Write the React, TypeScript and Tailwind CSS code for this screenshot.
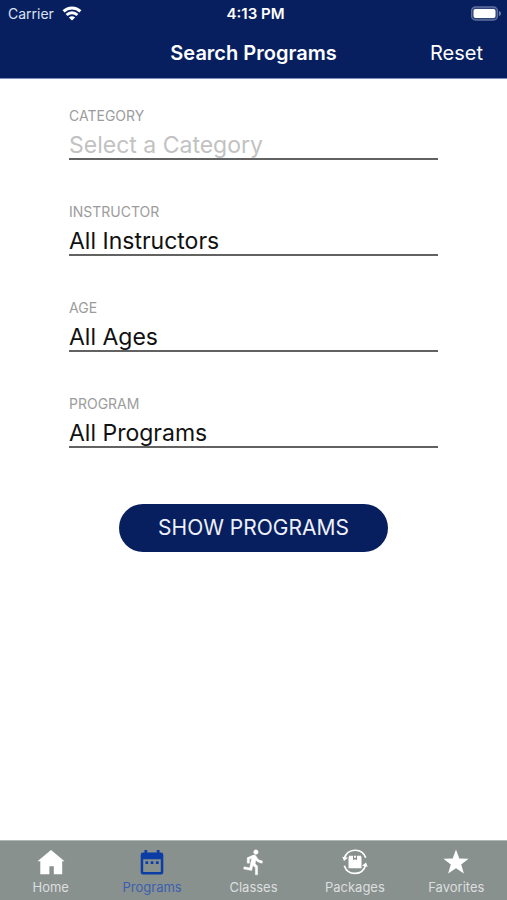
import type { ReactNode } from "react";

const fields = [
  { id: "category", label: "CATEGORY", value: "Select a Category", empty: true },
  { id: "instructor", label: "INSTRUCTOR", value: "All Instructors", empty: false },
  { id: "age", label: "AGE", value: "All Ages", empty: false },
  { id: "program", label: "PROGRAM", value: "All Programs", empty: false },
];

function WifiIcon() {
  return (
    <svg className="h-4 w-5" viewBox="0 0 20 16" fill="none" stroke="white" strokeWidth="3" aria-hidden="true">
      <path d="M1.6 5.400C6.200 .8 13.800 .8 18.400 5.400" />
      <path d="M4.600 9c3.100-2.900 7.700-2.900 10.800 0" />
      <path d="M10 14.500 6.900 11.400c1.700-1.600 4.500-1.600 6.200 0Z" fill="white" stroke="none" />
    </svg>
  );
}

function BatteryIcon() {
  return (
    <svg className="h-4 w-8" viewBox="0 0 32 16" aria-label="Battery full">
      <rect x="0.500" y="1" width="26" height="13" rx="4" fill="#2f4379" stroke="#5f70a0" strokeWidth="1.300" />
      <rect x="2.500" y="3" width="22" height="9" rx="2" fill="white" />
      <path d="M28 5c2.600 1 2.600 4 0 5Z" fill="#7080ab" />
    </svg>
  );
}

function HomeIcon() {
  return (
    <svg className="size-7" viewBox="0 0 28 28" fill="currentColor" aria-hidden="true">
      <path d="M14 2 27.500 13.300H.500Z" />
      <path d="M3.300 13h21.900v13.200h-8.400v-7.900h-4.400v7.900H3.300Z" />
    </svg>
  );
}

function CalendarIcon() {
  return (
    <svg className="size-7" viewBox="0 0 28 28" aria-hidden="true">
      <path
        fill="currentColor"
        fillRule="evenodd"
        d="M6.500 2h2.700v2.500h9.600V2h2.700v2.500h1.500A2.300 2.300 0 0 1 25.300 6.800v17.400a2.300 2.300 0 0 1-2.300 2.300H5a2.300 2.300 0 0 1-2.300-2.300V6.800A2.300 2.300 0 0 1 5 4.500h1.500ZM5.200 11.300v12.700h17.600V11.300Z"
      />
      <g fill="currentColor">
        <rect x="7.500" y="13.300" width="2.700" height="2.700" />
        <rect x="12.700" y="13.300" width="2.700" height="2.700" />
        <rect x="17.900" y="13.300" width="2.700" height="2.700" />
      </g>
    </svg>
  );
}

function RunIcon() {
  return (
    <svg className="size-7" viewBox="-1 0 24 24" fill="currentColor" stroke="currentColor" strokeWidth="0.3" aria-hidden="true">
      <path d="M13.490 5.480c1.100 0 2-.900 2-2s-.900-2-2-2-2 .900-2 2 .900 2 2 2zm-3.600 13.900l1-4.400 2.100 2v6h2v-7.500l-2.100-2 .600-3c1.300 1.500 3.300 2.500 5.500 2.500v-2c-1.900 0-3.500-1-4.300-2.400l-1-1.600c-.400-.600-1-1-1.700-1-.300 0-.500.100-.800.100l-5.200 2.200v4.700h2v-3.400l1.800-.700-1.600 8.100-4.900-1-.400 2 7 1.400z" />
    </svg>
  );
}

function PackagesIcon() {
  return (
    <svg className="size-7" viewBox="0 0 28 28" fill="none" aria-hidden="true">
      <g stroke="currentColor" strokeWidth="1.700">
        <path d="M3.300 10.500C6.500-.200 21-.500 24.700 9.700" />
        <path d="M3.300 17.700C7 28.300 21.500 28 24.700 17" />
      </g>
      <path d="M1.300 8.700 3 13l4-3.200ZM26.700 18.700 25 14.500l-4 3.200Z" fill="currentColor" />
      <path d="M8 7.800h4v4.500l2-1 2 1V7.800h4l.500 2.500v10h-13v-10Z" fill="currentColor" />
      <path d="M13 7.800h2v2h-2Z" fill="currentColor" />
    </svg>
  );
}

function StarIcon() {
  return (
    <svg className="size-7" viewBox="0 0 28 28" fill="currentColor" aria-hidden="true">
      <path d="m14 1.500 3.300 8.900 9.300.300-7.400 5.700 2.700 9.100-7.900-5.300-7.900 5.300 2.700-9.100-7.400-5.700 9.300-.300Z" />
    </svg>
  );
}

const tabs: { label: string; icon: ReactNode; active?: boolean }[] = [
  { label: "Home", icon: <HomeIcon /> },
  { label: "Programs", icon: <CalendarIcon />, active: true },
  { label: "Classes", icon: <RunIcon /> },
  { label: "Packages", icon: <PackagesIcon /> },
  { label: "Favorites", icon: <StarIcon /> },
];

export default function App() {
  return (
    <div className="flex min-h-screen flex-col bg-white font-['Inter','Liberation_Sans',sans-serif]">
      <header className="border-b border-[#7d90bd] bg-[#071f5f] text-white">
        <div className="grid h-7 grid-cols-[1fr_auto_1fr] items-center pr-1 pl-2 text-sm">
          <div className="flex items-center gap-2 text-[#dde2f0]">
            <span>Carrier</span>
            <WifiIcon />
          </div>
          <time className="text-center text-[15px] font-semibold">4:13 PM</time>
          <div className="flex justify-end">
            <BatteryIcon />
          </div>
        </div>
        <div className="grid h-[50px] grid-cols-[1fr_auto_1fr] items-center px-6 text-xl">
          <h1 className="col-start-2 font-semibold">Search Programs</h1>
          <button type="button" className="justify-self-end">Reset</button>
        </div>
      </header>

      <main className="flex-1 px-[69px] pt-[29px]">
        <form onSubmit={(event) => event.preventDefault()}>
          <div className="flex flex-col gap-11">
            {fields.map((field) => (
              <div key={field.id} className="flex flex-col">
                <label htmlFor={field.id} className="text-sm leading-4 text-[#9c9c9c]">
                  {field.label}
                </label>
                <div className="border-b-2 border-[#626262] pt-2">
                  <select
                    id={field.id}
                    defaultValue={field.value}
                    className={`block h-[26px] w-full appearance-none bg-transparent text-[23px] leading-[26px] outline-none ${
                      field.empty ? "text-[#c2c2c2]" : "text-[#111111]"
                    }`}
                  >
                    <option>{field.value}</option>
                  </select>
                </div>
              </div>
            ))}
          </div>
          <div className="mt-14 px-[50px]">
            <button type="submit" className="h-12 w-full rounded-full bg-[#071f5f] text-[21px] text-[#eef1fb]">
              SHOW PROGRAMS
            </button>
          </div>
        </form>
      </main>

      <nav aria-label="Main" className="h-[60px] border-t border-[#b3b8b7] bg-[#89918f]">
        <ul className="grid h-full grid-cols-5">
          {tabs.map((tab) => (
            <li key={tab.label}>
              <a
                href="#"
                aria-current={tab.active ? "page" : undefined}
                className={`flex flex-col items-center gap-[3px] pt-[7px] ${tab.active ? "text-[#0b3da5]" : "text-white"}`}
              >
                {tab.icon}
                <span className={`text-[13px] leading-4 ${tab.active ? "text-[#3b5fae]" : "text-[#dcdfde]"}`}>{tab.label}</span>
              </a>
            </li>
          ))}
        </ul>
      </nav>
    </div>
  );
}
